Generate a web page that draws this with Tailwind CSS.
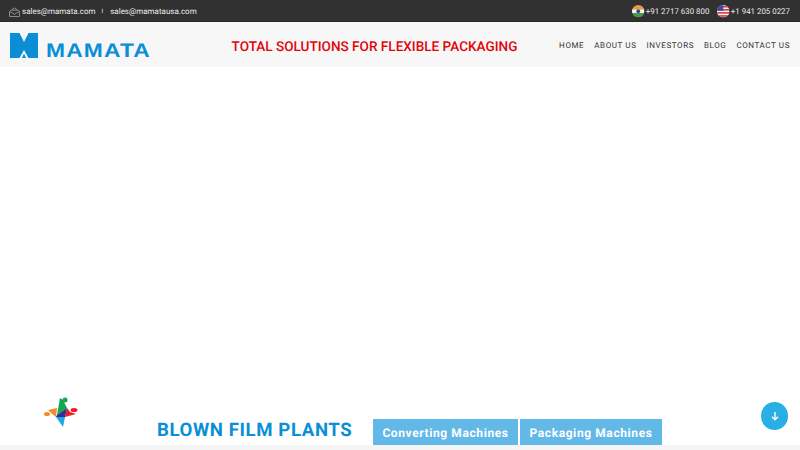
<!DOCTYPE html>
<html lang="en">
<head>
    <meta charset="UTF-8">
    <meta name="viewport" content="width=device-width, initial-scale=1.0">
    <title>Mamata</title>
    <script src="https://cdn.jsdelivr.net/npm/@tailwindcss/browser@4"></script>
</head>
<body class="bg-white font-['Roboto',sans-serif] [text-rendering:geometricPrecision]">
    <div class="relative h-[450px] w-[800px] overflow-hidden flex flex-col">
        <!-- Top bar -->
        <div class="h-[22px] bg-[#313131] border-b border-[#2a2a2a] flex items-center justify-between pl-[9px] pr-[10px] pt-[2px] text-[7.9px] leading-none text-[#ececec] shrink-0 whitespace-nowrap">
            <div class="flex items-center text-[8px]">
                <svg width="11" height="10" viewBox="0 0 11 10" fill="none" stroke="#8a8a8a" stroke-width="1" class="mr-[2px]">
                    <path d="M0.5 4.5 L5.5 0.8 L10.5 4.5 V9.5 H0.5 Z"/>
                    <path d="M0.5 4.5 L5.5 7.2 L10.5 4.5"/>
                    <path d="M2.5 3.2 H8.5"/>
                </svg>
                <span>sales@mamata.com</span>
                <span class="ml-[6px] mr-[7px] text-[6px]">I</span>
                <span>sales@mamatausa.com</span>
            </div>
            <div class="flex items-center">
                <svg width="12.5" height="12.5" viewBox="0 0 13 13">
                    <defs><clipPath id="c1"><circle cx="6.5" cy="6.5" r="6.5"/></clipPath></defs>
                    <g clip-path="url(#c1)">
                        <rect width="13" height="4.4" fill="#f09a36"/>
                        <rect y="4.4" width="13" height="4.3" fill="#f4f4f4"/>
                        <rect y="8.7" width="13" height="4.3" fill="#4e9a3a"/>
                        <circle cx="6.5" cy="6.5" r="2" fill="#1f4f9c"/>
                    </g>
                </svg>
                <span class="ml-px">+91 2717 630 800</span>
                <svg width="12.5" height="12.5" viewBox="0 0 13 13" class="ml-[8px]">
                    <defs><clipPath id="c2"><circle cx="6.5" cy="6.5" r="6.5"/></clipPath></defs>
                    <g clip-path="url(#c2)">
                        <rect width="13" height="13" fill="#f4f4f4"/>
                        <rect y="1" width="13" height="1.6" fill="#d8303a"/>
                        <rect y="4.2" width="13" height="1.6" fill="#d8303a"/>
                        <rect y="7.4" width="13" height="1.6" fill="#d8303a"/>
                        <rect y="10.6" width="13" height="1.6" fill="#d8303a"/>
                        <rect width="6.5" height="6" fill="#3a4a9c"/>
                    </g>
                </svg>
                <span class="ml-px">+1 941 205 0227</span>
            </div>
        </div>

        <!-- Nav -->
        <header class="h-[45px] bg-[#f7f7f7] flex items-center shrink-0 whitespace-nowrap">
            <div class="w-[221px] pl-[10px] flex items-end shrink-0 pt-px">
                <svg width="28" height="25" viewBox="0 0 28 25" class="shrink-0">
                    <path fill="#0a8fd6" d="M0 0 H9.5 L14 9 L18.5 0 H28 V25 H18.5 L14 17 L9.5 25 H0 Z"/>
                    <path fill="#0a8fd6" d="M14 20.5 L16 25 H12 Z"/>
                </svg>
                <span class="ml-[8px] text-[19.5px] leading-[14px] h-[14px] font-bold tracking-[1px] text-[#0a8fd6] font-['Liberation_Sans',sans-serif] origin-left scale-x-[1.17]">MAMATA</span>
            </div>
            <div class="w-[307px] pt-[5px] text-[13.57px] font-medium text-[#e0040b] text-center">TOTAL SOLUTIONS FOR FLEXIBLE PACKAGING</div>
            <nav class="flex-1 flex justify-end gap-[10px] pr-[10px] pt-[3px] text-[8px] tracking-[0.6px] text-[#333]">
                <a href="#">HOME</a>
                <a href="#">ABOUT US</a>
                <a href="#">INVESTORS</a>
                <a href="#">BLOG</a>
                <a href="#">CONTACT US</a>
            </nav>
        </header>

        <!-- Main -->
        <main class="flex-1 flex items-end whitespace-nowrap">
            <div class="w-[157px] shrink-0 pl-[44px] pb-[18px]">
                <svg width="34" height="30" viewBox="0 0 34 30">
                    <path fill="#f28c28" d="M4 13 L13 11 L12 20 L7 16 Z"/>
                    <ellipse cx="3" cy="17" rx="3" ry="2" fill="#f28c28"/>
                    <path fill="#12a84f" d="M16 1 L19 3 L23 11 L13 18 Z"/>
                    <circle cx="21" cy="3" r="2.5" fill="#12a84f"/>
                    <path fill="#ee1c25" d="M23 11 L26 15 L32 17 L21 20 Z"/>
                    <ellipse cx="30" cy="13" rx="3.5" ry="2" fill="#ee1c25"/>
                    <path fill="#2e3192" d="M13 18 L23 11 L21 20 L12 20 Z"/>
                    <path fill="#1ea7e8" d="M12 20 L21 20 L19 30 Z"/>
                </svg>
            </div>
            <h2 class="w-[216px] shrink-0 text-[18.6px] leading-none font-bold tracking-[0.6px] text-[#0a8fd6] pb-[5px]">BLOWN FILM PLANTS</h2>
            <a href="#" class="w-[145px] h-[26px] pt-px shrink-0 flex items-center justify-center bg-[#62b9e7] text-white text-[12px] font-bold tracking-[0.6px]">Converting Machines</a>
            <a href="#" class="ml-[2px] w-[142px] h-[26px] pt-px shrink-0 flex items-center justify-center bg-[#62b9e7] text-white text-[12px] font-bold tracking-[0.6px]">Packaging Machines</a>
        </main>
        <div class="h-[5px] bg-[#f5f5f5] shrink-0"></div>

        <!-- Scroll button -->
        <a href="#" class="absolute left-[761px] top-[402px] w-[27px] h-[28px] rounded-full bg-[#27afe6] flex items-center justify-center">
            <svg width="10" height="10" viewBox="0 0 10 10" fill="none" stroke="white" stroke-width="1.4">
                <path d="M5 1 V8.5 M2 5.7 L5 8.7 L8 5.7"/>
            </svg>
        </a>
    </div>
</body>
</html>
